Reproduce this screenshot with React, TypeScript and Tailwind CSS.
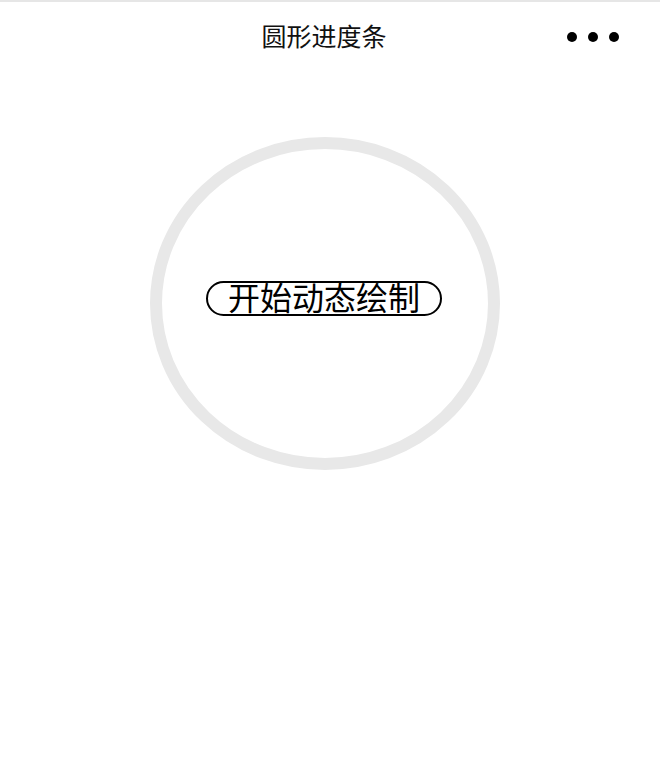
import React from "react";

const font = { fontFamily: '"Noto Sans CJK SC", "Noto Sans", sans-serif' };

export default function App() {
  return (
    <div className="w-[660px] h-[784px] bg-white flex flex-col" style={font}>
      <div className="h-[2px] bg-[#e6e6e6]" />
      <div className="relative h-[70px] flex items-center justify-center pr-[12px]">
        <span className="text-[25px] leading-[25px] text-[#111] mt-[-3px]">圆形进度条</span>
        <div className="absolute right-[41px] top-[30px] flex gap-[11px]">
          <span className="block w-[10px] h-[10px] rounded-full bg-black" />
          <span className="block w-[10px] h-[10px] rounded-full bg-black" />
          <span className="block w-[10px] h-[10px] rounded-full bg-black" />
        </div>
      </div>
      <div className="flex justify-center pt-[65px]">
        <div className="relative w-[350px] h-[333px] ml-[-10px] flex items-center justify-center">
          <svg className="absolute inset-0" width="350" height="333" viewBox="0 0 350 333">
            <ellipse cx="175" cy="166.5" rx="169" ry="160.5" fill="none" stroke="#e8e8e8" strokeWidth="12" />
          </svg>
          <button className="relative mt-[-11px] ml-[-2px] h-[35px] px-[20px] rounded-full border-[2px] border-black bg-white text-black text-[32px] leading-[32px] flex items-center" style={font}>
            <span className="relative top-[-2px]">开始动态绘制</span>
          </button>
        </div>
      </div>
    </div>
  );
}
